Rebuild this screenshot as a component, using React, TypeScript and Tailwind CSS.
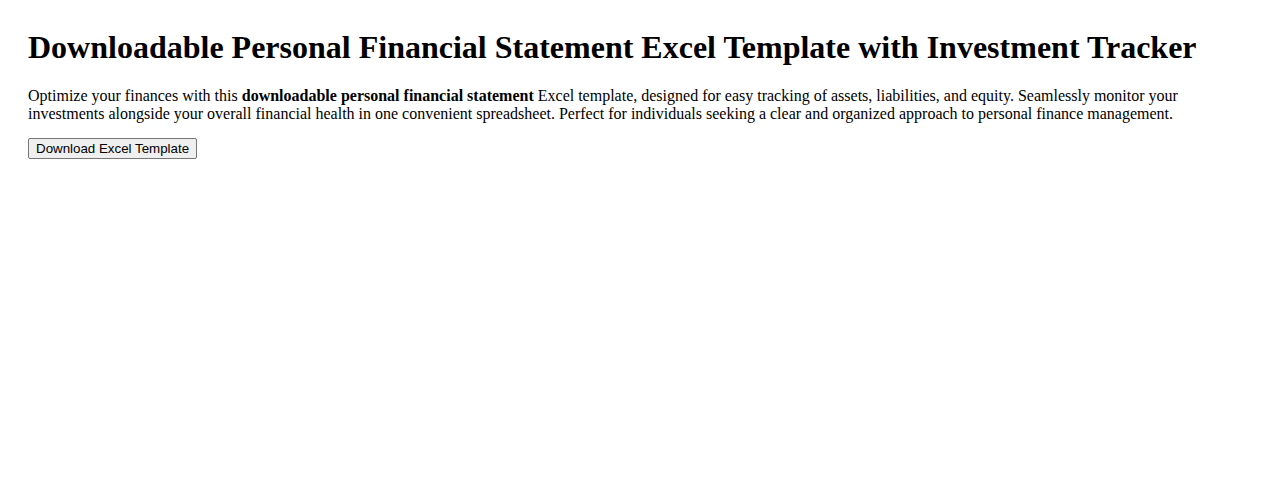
export default function App() {
  return (
    <div className="min-h-[501px] bg-white px-[28px] pt-[29px] text-black [font-family:'Liberation_Serif','Times_New_Roman',serif]">
      <h1 className="mb-[21.44px] text-[32px] font-bold leading-[normal]">
        Downloadable Personal Financial Statement Excel Template with Investment Tracker
      </h1>
      <p className="mb-[15px] text-base leading-[normal]">
        Optimize your finances with this <strong className="font-bold">downloadable personal financial statement</strong> Excel
        template, designed for easy tracking of assets, liabilities, and equity. Seamlessly monitor your investments
        alongside your overall financial health in one convenient spreadsheet. Perfect for individuals seeking a clear
        and organized approach to personal finance management.
      </p>
      <button
        type="button"
        className="block rounded-[2px] border border-[#767676] bg-[#efefef] px-[7px] py-[2px] text-[13.333px] leading-[normal] text-black [font-family:'Liberation_Sans',Arial,sans-serif] hover:bg-[#e5e5e5]"
      >
        Download Excel Template
      </button>
    </div>
  );
}
